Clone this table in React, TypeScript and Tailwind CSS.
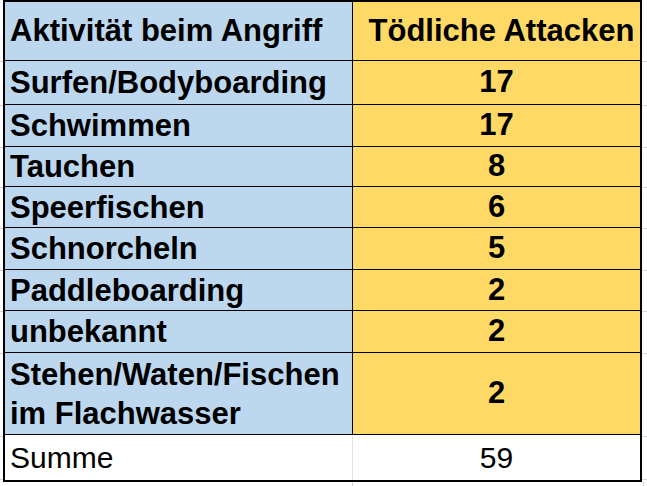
const ROWS = [
  { label: ["Surfen/Bodyboarding"], value: "17", h: "h-[44px]" },
  { label: ["Schwimmen"], value: "17", h: "h-[42px]" },
  { label: ["Tauchen"], value: "8", h: "h-[40px]" },
  { label: ["Speerfischen"], value: "6", h: "h-[41px]" },
  { label: ["Schnorcheln"], value: "5", h: "h-[42px]" },
  { label: ["Paddleboarding"], value: "2", h: "h-[41px]" },
  { label: ["unbekannt"], value: "2", h: "h-[42px]" },
  { label: ["Stehen/Waten/Fischen", "im Flachwasser"], value: "2", h: "h-[83px]" },
];

// grey spreadsheet gridline stubs left and right of the table
const STUBS = ["h-[62px]", "h-[44px]", "h-[42px]", "h-[40px]", "h-[41px]", "h-[42px]", "h-[41px]", "h-[42px]", "h-[83px]", "h-[43px]"];

function Gutter({ className }: { className: string }) {
  return (
    <div className={`flex flex-col ${className}`}>
      {STUBS.map((h, i) => (
        <div key={i} className={`${h} border-b border-[#d6d6d6]`} />
      ))}
    </div>
  );
}

export default function App() {
  return (
    <div
      className="h-[486px] w-[647px] overflow-hidden bg-white text-black"
      style={{ fontFamily: '"Liberation Sans", Arial, sans-serif' }}
    >
      <div className="flex h-[482px]">
        <Gutter className="w-[3px]" />
        <div className="flex w-[639px] flex-col border-2 border-black">
          <div className="flex h-[60px] border-b border-black text-[31px] font-bold">
            <div className="flex w-[348px] items-center border-r border-black bg-[#bdd7ee] pl-[5px]">
              Aktivität beim Angriff
            </div>
            <div className="flex flex-1 items-center justify-center whitespace-nowrap bg-[#ffd966] pl-[10px]">
              Tödliche Attacken
            </div>
          </div>
          {ROWS.map((r) => (
            <div key={r.label[0]} className={`flex ${r.h} border-b border-black text-[31px] font-bold`}>
              <div className="flex w-[348px] flex-col justify-center border-r border-black bg-[#bdd7ee] pl-[5px] leading-[39px]">
                {r.label.map((l) => (
                  <span key={l} className="whitespace-nowrap">
                    {l}
                  </span>
                ))}
              </div>
              <div className="flex flex-1 items-center justify-center bg-[#ffd966]">{r.value}</div>
            </div>
          ))}
          <div className="flex flex-1 text-[30px]">
            <div className="flex w-[348px] items-center border-r border-[#e2e2e2] pl-[5px]">Summe</div>
            <div className="flex flex-1 items-center justify-center">59</div>
          </div>
        </div>
        <Gutter className="flex-1" />
      </div>
      <div className="flex h-[4px] pl-[352px]">
        <div className="w-[292px] border-x border-[#d6d6d6]" />
      </div>
    </div>
  );
}
